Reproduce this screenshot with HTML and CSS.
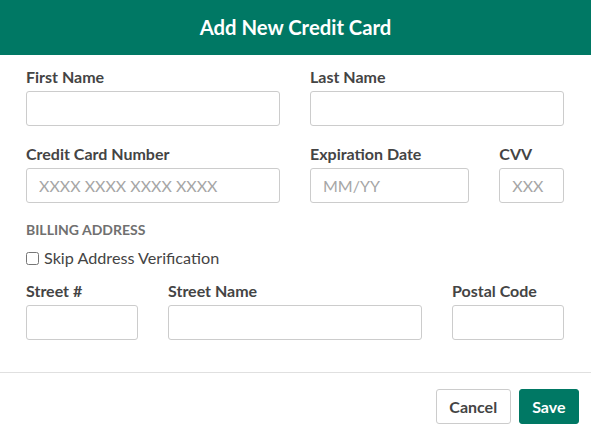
FILE: index.html
```html
<!DOCTYPE html>
<html lang="en">
<head>
<meta charset="utf-8">
<title>Add New Credit Card</title>
<link rel="stylesheet" href="styles.css">
</head>
<body>
<div class="modal">
  <header class="modal-header">
    <h1 class="modal-title">Add New Credit Card</h1>
  </header>
  <div class="modal-body">
    <div class="row">
      <div class="field span-6">
        <label class="field-label">First Name</label>
        <input class="input" type="text">
      </div>
      <div class="field span-6">
        <label class="field-label">Last Name</label>
        <input class="input" type="text">
      </div>
    </div>
    <div class="row">
      <div class="field span-6">
        <label class="field-label">Credit Card Number</label>
        <input class="input" type="text" placeholder="XXXX XXXX XXXX XXXX">
      </div>
      <div class="field span-4">
        <label class="field-label">Expiration Date</label>
        <input class="input" type="text" placeholder="MM/YY">
      </div>
      <div class="field span-2">
        <label class="field-label">CVV</label>
        <input class="input" type="text" placeholder="XXX">
      </div>
    </div>
    <div class="section-title">Billing Address</div>
    <label class="check"><input class="check-box" type="checkbox">Skip Address Verification</label>
    <div class="row row-last">
      <div class="field span-3">
        <label class="field-label">Street #</label>
        <input class="input" type="text">
      </div>
      <div class="field span-6">
        <label class="field-label">Street Name</label>
        <input class="input" type="text">
      </div>
      <div class="field span-3">
        <label class="field-label">Postal Code</label>
        <input class="input" type="text">
      </div>
    </div>
  </div>
  <footer class="modal-footer">
    <button class="btn btn-default" type="button">Cancel</button>
    <button class="btn btn-primary" type="button">Save</button>
  </footer>
</div>
</body>
</html>
```
FILE: styles.css
```css
* { box-sizing: border-box; }
html, body { margin: 0; padding: 0; background: #fff; }
body { font-family: Lato, "Open Sans", "Liberation Sans", sans-serif; color: #444; }

.modal { width: 591px; height: 434px; overflow: hidden; }

.modal-header {
  height: 55px;
  background: #007864;
  display: flex;
  align-items: center;
  justify-content: center;
}
.modal-title {
  margin: 0;
  font-size: 20.3px;
  font-weight: 700;
  color: #fff;
  line-height: 24px;
  padding-bottom: 2px;
}

.modal-body { padding: 12px 27px 32px 26px; }

.row {
  display: grid;
  grid-template-columns: repeat(12, 1fr);
  column-gap: 30px;
  margin-bottom: 18px;
}
.row-last { margin-bottom: 0; }
.span-2 { grid-column: span 2; }
.span-3 { grid-column: span 3; }
.span-4 { grid-column: span 4; }
.span-6 { grid-column: span 6; }

.field { display: flex; flex-direction: column; min-width: 0; }
.field-label {
  font-size: 16px;
  font-weight: 700;
  line-height: 20px;
  height: 20px;
  margin-bottom: 4px;
  color: #444;
}
.input {
  display: block;
  height: 35px;
  width: 100%;
  margin: 0;
  border: 1px solid #ccc;
  border-radius: 3px;
  padding: 0 12px;
  font-family: inherit;
  font-size: 16px;
  color: #444;
  background: #fff;
}
.input::placeholder { color: #a6a6a6; }

.section-title {
  margin-top: 15px;
  height: 18px;
  font-size: 14px;
  font-weight: 700;
  line-height: 18px;
  text-transform: uppercase;
  color: #707070;
}

.check {
  display: flex;
  align-items: center;
  height: 20px;
  margin-top: 9px;
  margin-bottom: 13px;
  font-size: 16.2px;
  line-height: 20px;
  color: #444;
}
.check-box { width: 13px; height: 13px; margin: 0 5px 0 0; flex-shrink: 0; }

.modal-footer {
  border-top: 1px solid #e0e0e0;
  padding: 16px 12px 10px;
  display: flex;
  justify-content: flex-end;
  gap: 8px;
}
.btn {
  height: 35px;
  padding: 0 12.5px;
  border-radius: 3px;
  font-family: inherit;
  font-size: 16px;
  font-weight: 700;
  cursor: pointer;
}
.btn-default { background: #fff; border: 1px solid #ccc; color: #444; }
.btn-primary { background: #007864; border: 1px solid #007864; color: #fff; }
```
